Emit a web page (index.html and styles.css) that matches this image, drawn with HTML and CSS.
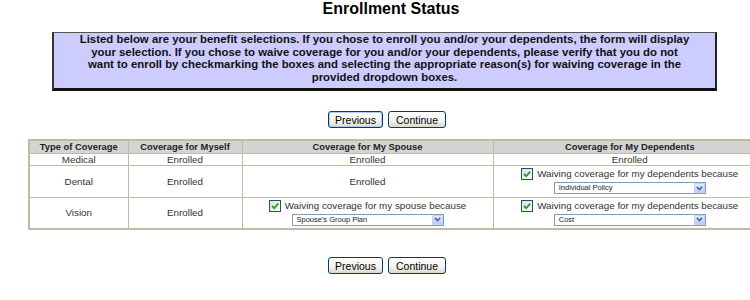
FILE: index.html
```html
<!DOCTYPE html>
<html lang="en">
<head>
    <meta charset="UTF-8">
    <meta name="viewport" content="width=device-width, initial-scale=1.0">
    <title>Enrollment Status</title>
    <link rel="stylesheet" href="styles.css">
</head>
<body>
    <div class="page">
        <h1 class="title">Enrollment Status</h1>

        <div class="notice">
            Listed below are your benefit selections. If you chose to enroll you and/or your dependents, the form will display
            your selection. If you chose to waive coverage for you and/or your dependents, please verify that you do not
            want to enroll by checkmarking the boxes and selecting the appropriate reason(s) for waiving coverage in the
            provided dropdown boxes.
        </div>

        <div class="nav nav-top">
            <button class="btn btn-prev btn-focus">Previous</button>
            <button class="btn btn-next">Continue</button>
        </div>

        <table class="coverage">
            <colgroup>
                <col class="col-type">
                <col class="col-self">
                <col class="col-spouse">
                <col class="col-deps">
            </colgroup>
            <tr class="row-head">
                <th>Type of Coverage</th>
                <th>Coverage for Myself</th>
                <th>Coverage for My Spouse</th>
                <th>Coverage for My Dependents</th>
            </tr>
            <tr class="row-short">
                <td>Medical</td>
                <td>Enrolled</td>
                <td>Enrolled</td>
                <td>Enrolled</td>
            </tr>
            <tr class="row-tall">
                <td>Dental</td>
                <td>Enrolled</td>
                <td>Enrolled</td>
                <td>
                    <div class="waive">
                        <label class="waive-line">
                            <span class="check"><svg width="10" height="10" viewBox="0 0 10 10"><path d="M2 5 L4.2 7.2 L8.2 2.6" fill="none" stroke="#21a121" stroke-width="1.8"/></svg></span>
                            Waiving coverage for my dependents because
                        </label>
                        <div class="dropdown">
                            <span class="dropdown-text">Individual Policy</span>
                            <span class="dropdown-btn"><svg width="7" height="5" viewBox="0 0 7 5"><path d="M0.8 0.8 L3.5 3.6 L6.2 0.8" fill="none" stroke="#4d6185" stroke-width="1.5"/></svg></span>
                        </div>
                    </div>
                </td>
            </tr>
            <tr class="row-tall">
                <td>Vision</td>
                <td>Enrolled</td>
                <td>
                    <div class="waive">
                        <label class="waive-line">
                            <span class="check"><svg width="10" height="10" viewBox="0 0 10 10"><path d="M2 5 L4.2 7.2 L8.2 2.6" fill="none" stroke="#21a121" stroke-width="1.8"/></svg></span>
                            Waiving coverage for my spouse because
                        </label>
                        <div class="dropdown">
                            <span class="dropdown-text">Spouse's Group Plan</span>
                            <span class="dropdown-btn"><svg width="7" height="5" viewBox="0 0 7 5"><path d="M0.8 0.8 L3.5 3.6 L6.2 0.8" fill="none" stroke="#4d6185" stroke-width="1.5"/></svg></span>
                        </div>
                    </div>
                </td>
                <td>
                    <div class="waive">
                        <label class="waive-line">
                            <span class="check"><svg width="10" height="10" viewBox="0 0 10 10"><path d="M2 5 L4.2 7.2 L8.2 2.6" fill="none" stroke="#21a121" stroke-width="1.8"/></svg></span>
                            Waiving coverage for my dependents because
                        </label>
                        <div class="dropdown">
                            <span class="dropdown-text">Cost</span>
                            <span class="dropdown-btn"><svg width="7" height="5" viewBox="0 0 7 5"><path d="M0.8 0.8 L3.5 3.6 L6.2 0.8" fill="none" stroke="#4d6185" stroke-width="1.5"/></svg></span>
                        </div>
                    </div>
                </td>
            </tr>
        </table>

        <div class="nav nav-bottom">
            <button class="btn btn-prev">Previous</button>
            <button class="btn btn-next">Continue</button>
        </div>
    </div>
</body>
</html>
```

FILE: styles.css
```css
body {
    margin: 0;
    font-family: "Liberation Sans", Arial, sans-serif;
    color: #333;
    background: #fff;
    overflow: hidden;
}

.page {
    width: 790px;
}

.title {
    margin: 0;
    width: 782px;
    font-size: 16px;
    line-height: 18px;
    font-weight: bold;
    text-align: center;
    color: #000;
}

.notice {
    margin: 14px 0 0 52px;
    width: 665px;
    box-sizing: border-box;
    background: #ccccff;
    border-style: solid;
    border-color: #555 #222 #111 #333;
    border-width: 1px 2px 3px 2px;
    padding: 0 25px 5px;
    font-size: 11.4px;
    line-height: 12.5px;
    font-weight: bold;
    text-align: center;
    color: #111;
}

.nav {
    display: flex;
    justify-content: center;
    gap: 5px;
    width: 774px;
}

.nav-top {
    margin-top: 20px;
}

.nav-bottom {
    margin-top: 27px;
}

.btn {
    height: 17px;
    padding: 0;
    font-family: "Liberation Sans", Arial, sans-serif;
    font-size: 10.5px;
    color: #000;
    border: 1px solid #003c74;
    border-radius: 3px;
    background: linear-gradient(#ffffff, #f4f3ee 60%, #dcd8ca);
}

.btn-prev {
    width: 55px;
}

.btn-next {
    width: 58px;
}

.btn-focus {
    box-shadow: inset 0 0 0 1px #b3cbef;
}

.coverage {
    margin: 11px 0 0 28px;
    width: 738px;
    table-layout: fixed;
    border-collapse: collapse;
    border: 2px solid #c2bba3;
    font-size: 9.8px;
}

.col-type {
    width: 99px;
}

.col-self {
    width: 114px;
}

.col-spouse {
    width: 251px;
}

.col-deps {
    width: 274px;
}

.coverage th,
.coverage td {
    border: 1px solid #c2bba3;
    padding: 0;
    text-align: center;
    vertical-align: middle;
    line-height: 11px;
}

.coverage th {
    background: #d4d4d4;
    font-size: 9.4px;
    font-weight: bold;
    color: #222;
}

.row-head {
    height: 13px;
}

.row-short {
    height: 12px;
}

.row-tall {
    height: 32px;
}

.waive {
    display: flex;
    flex-direction: column;
    align-items: center;
    gap: 2px;
}

.waive-line {
    display: flex;
    align-items: center;
    gap: 4px;
    line-height: 12px;
}

.check {
    width: 12px;
    height: 12px;
    box-sizing: border-box;
    border: 1px solid #1c5180;
    background: linear-gradient(135deg, #dcdcd7, #ffffff);
    display: flex;
    align-items: center;
    justify-content: center;
}

.dropdown {
    width: 152px;
    height: 12px;
    box-sizing: border-box;
    border: 1px solid #7f9db9;
    background: #fff;
    display: flex;
}

.dropdown-text {
    flex: 1;
    padding-left: 4px;
    font-size: 7.5px;
    line-height: 10px;
    text-align: left;
    color: #222;
}

.dropdown-btn {
    width: 11px;
    box-sizing: border-box;
    border: 1px solid #c3d3fd;
    border-radius: 1px;
    background: linear-gradient(#e3ebfe, #b9cdf7);
    display: flex;
    align-items: center;
    justify-content: center;
}
```
